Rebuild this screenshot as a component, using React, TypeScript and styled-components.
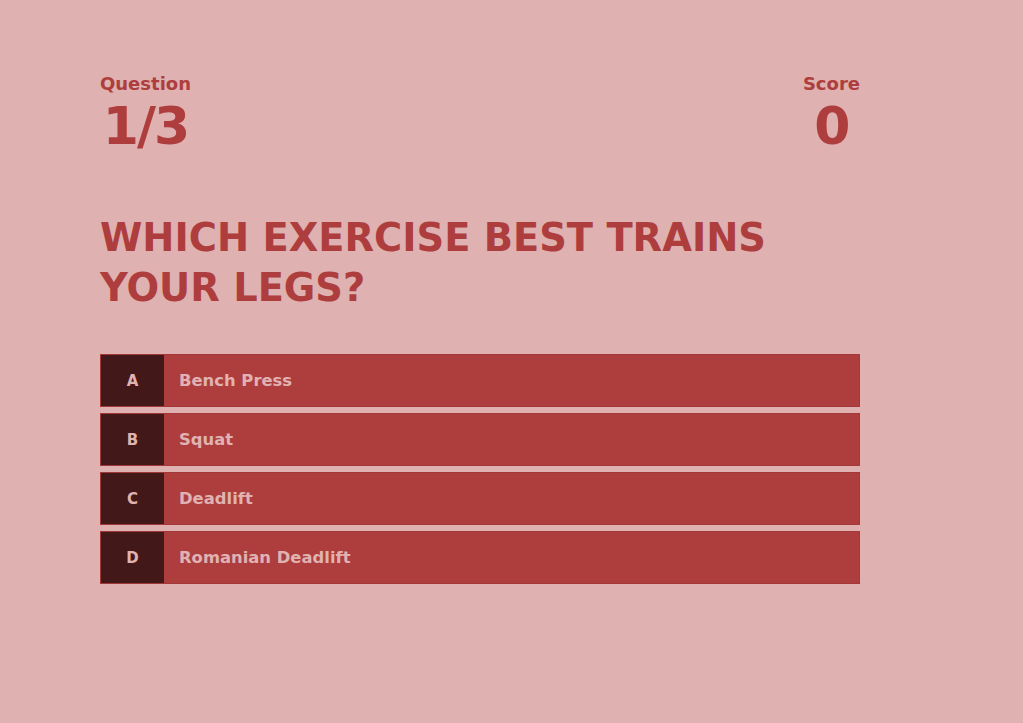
import React from "react";
import styled, { createGlobalStyle } from "styled-components";

const Global = createGlobalStyle`
  html, body { margin: 0; padding: 0; background: #dfb1b0; }
  body { font-family: "DejaVu Sans", "Liberation Sans", sans-serif; }
  * { box-sizing: border-box; }
`;

const Page = styled.div`
  min-height: 723px;
  padding: 70px 0 0 100px;
`;

const Quiz = styled.div`
  width: 760px;
  display: flex;
  flex-direction: column;
`;

const Header = styled.div`
  display: flex;
  justify-content: space-between;
  align-items: flex-start;
`;

const Stat = styled.div`
  display: flex;
  flex-direction: column;
  align-items: center;
  color: #ae3e3e;
`;

const StatLabel = styled.div`
  font-size: 18px;
  font-weight: 700;
  line-height: 28px;
`;

const StatValue = styled.div`
  font-size: 52px;
  font-weight: 700;
  line-height: 56px;
  letter-spacing: -2px;
`;

const Title = styled.h1`
  margin: 59px 0 0;
  color: #ae3e3e;
  font-size: 38.4px;
  line-height: 50px;
  font-weight: 700;
  text-transform: uppercase;
  max-width: 680px;
`;

const Options = styled.div`
  margin-top: 41px;
  display: flex;
  flex-direction: column;
  gap: 6px;
`;

const Option = styled.button`
  display: flex;
  align-items: stretch;
  height: 53px;
  padding: 0;
  border: 1px solid #a33838;
  background: #ae3e3e;
  color: #e0b3b2;
  font-family: inherit;
  cursor: pointer;
  text-align: left;
`;

const Letter = styled.span`
  width: 63px;
  display: flex;
  align-items: center;
  justify-content: center;
  background: #431818;
  font-size: 15px;
  font-weight: 700;
`;

const Answer = styled.span`
  display: flex;
  align-items: center;
  padding-left: 15px;
  font-size: 16.4px;
  font-weight: 700;
`;

const options = [
  ["A", "Bench Press"],
  ["B", "Squat"],
  ["C", "Deadlift"],
  ["D", "Romanian Deadlift"],
];

export default function App() {
  return (
    <Page>
      <Global />
      <Quiz>
        <Header>
          <Stat>
            <StatLabel>Question</StatLabel>
            <StatValue>1/3</StatValue>
          </Stat>
          <Stat>
            <StatLabel>Score</StatLabel>
            <StatValue>0</StatValue>
          </Stat>
        </Header>
        <Title>Which exercise best trains your legs?</Title>
        <Options>
          {options.map(([l, t]) => (
            <Option key={l}>
              <Letter>{l}</Letter>
              <Answer>{t}</Answer>
            </Option>
          ))}
        </Options>
      </Quiz>
    </Page>
  );
}
